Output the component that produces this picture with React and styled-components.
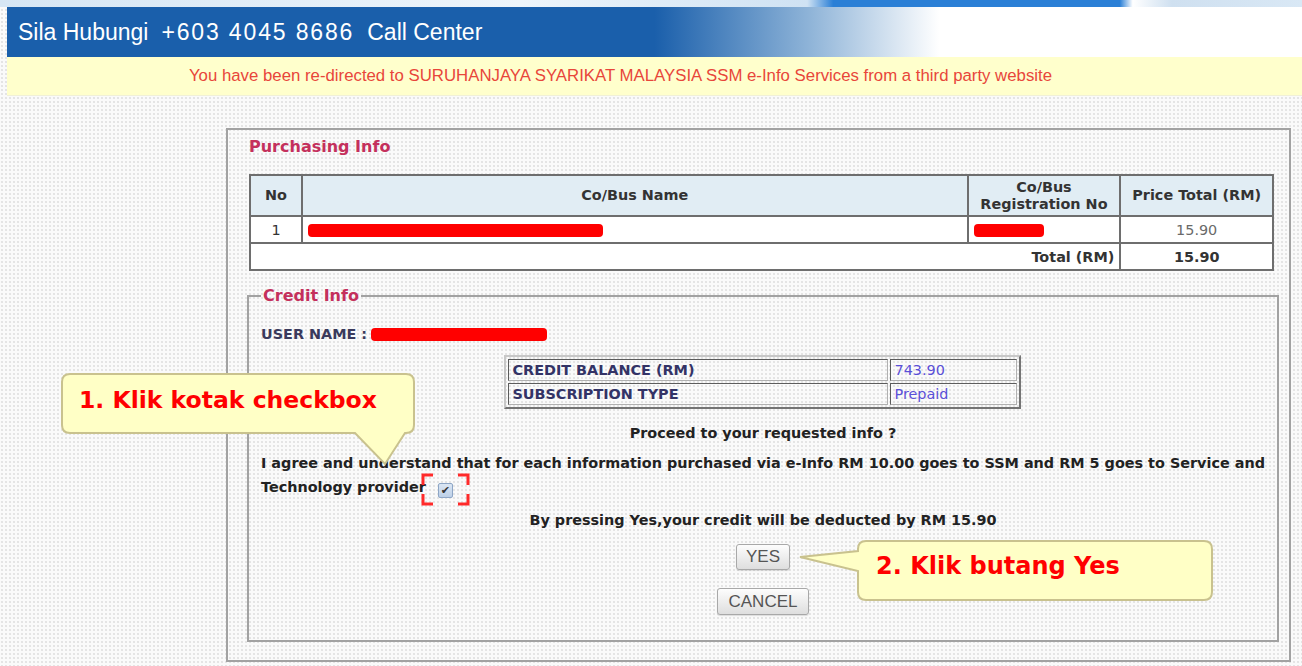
import styled, { createGlobalStyle } from "styled-components";

const GlobalStyle = createGlobalStyle`
  html, body {
    margin: 0;
    padding: 0;
  }
  body {
    background-color: #fafafa;
    background-image: radial-gradient(#e4e4e4 0.7px, transparent 1px);
    background-size: 4px 4px;
    font-family: "DejaVu Sans", Verdana, sans-serif;
  }
`;

const Page = styled.div`
  position: relative;
  width: 1302px;
  height: 666px;
  overflow: hidden;
`;

const TopStrip = styled.div`
  height: 7px;
  background: linear-gradient(
    90deg,
    #d6e6f4 0%,
    #eef5fb 40%,
    #cfe2f3 62%,
    #2a7fd6 64%,
    #2a7fd6 86%,
    #ffffff 87%,
    #cfe0f0 90%,
    #d9e8f5 100%
  );
`;

const Header = styled.div`
  margin-left: 7px;
  height: 50px;
  display: flex;
  align-items: center;
  gap: 13px;
  padding-left: 11px;
  background: linear-gradient(90deg, #1a5fab 0%, #1a5fab 50%, #8fb4d8 62%, #ffffff 72%, #ffffff 100%);
  color: #ffffff;
  font-family: "Liberation Sans", Arial, sans-serif;
  font-size: 23px;
  white-space: nowrap;
`;

const Phone = styled.span`
  letter-spacing: 1.85px;
`;

const Notice = styled.div`
  margin-left: 7px;
  height: 38px;
  display: flex;
  align-items: center;
  justify-content: center;
  padding-right: 68px;
  background: #ffffcc;
  border-bottom: 1px solid #f0f0d8;
  color: #e8463a;
  font-family: "Liberation Sans", Arial, sans-serif;
  font-size: 16.8px;
  white-space: nowrap;
`;

const Panel = styled.div`
  margin: 32px 11px 0 226px;
  border: 2px solid #a2a2a2;
  padding: 7px 15px 18px 21px;
`;

const SectionTitle = styled.div`
  color: #c4305c;
  font-weight: bold;
  font-size: 16px;
  line-height: 20px;
  margin-bottom: 17px;
`;

const OrderTable = styled.table`
  width: 1025px;
  border-collapse: collapse;
  border: 2px solid #6e6e6e;
  background: #ffffff;
  font-size: 14.4px;
  color: #333333;
`;

const HeadCell = styled.th`
  height: 39px;
  padding: 0 4px;
  background: #e1edf4;
  border: 2px solid #6e6e6e;
  font-weight: bold;
  line-height: 17px;
  text-align: center;
`;

const Cell = styled.td`
  height: 25px;
  padding: 0 5px;
  border: 2px solid #6e6e6e;
  line-height: 18px;
  text-align: ${({ $align }) => $align || "center"};
  font-weight: ${({ $bold }) => ($bold ? "bold" : "normal")};
  color: ${({ $muted }) => ($muted ? "#6a6a6a" : "#333333")};
`;

const Redacted = styled.span`
  display: inline-block;
  vertical-align: middle;
  width: ${({ $w }) => $w}px;
  height: 13px;
  background: #ff0000;
  border-radius: 4px;
`;

const CreditFieldset = styled.fieldset`
  margin: 16px -2px 0 -2px;
  border: 2px solid #a2a2a2;
  padding: 20px 12px 25px 12px;
`;

const Legend = styled.legend`
  padding: 0 2px;
  color: #c4305c;
  font-weight: bold;
  font-size: 16px;
  line-height: 18px;
`;

const UserRow = styled.div`
  display: flex;
  align-items: center;
  gap: 4px;
  color: #3a3a5c;
  font-weight: bold;
  font-size: 14.4px;
  line-height: 18px;
`;

const CreditTable = styled.table`
  margin: 12px auto 0;
  width: 517px;
  border: 2px outset #c8c8c8;
  border-spacing: 2px;
  font-size: 14.4px;
`;

const CreditLabel = styled.td`
  width: 372px;
  height: 20px;
  padding: 0 3px;
  border: 1px inset #b0b0b0;
  line-height: 18px;
  color: #333366;
  font-weight: bold;
`;

const CreditValue = styled.td`
  padding: 0 3px;
  border: 1px inset #b0b0b0;
  line-height: 18px;
  color: #5a50d8;
`;

const CenterLine = styled.div`
  text-align: center;
  font-weight: bold;
  font-size: 14.4px;
  line-height: 18px;
  color: #222222;
  margin-top: ${({ $top }) => $top}px;
`;

const Agreement = styled.div`
  margin-top: 9px;
  font-weight: bold;
  font-size: 14.4px;
  line-height: 24px;
  color: #222222;
  white-space: nowrap;
`;

const CheckWrap = styled.span`
  position: relative;
  display: inline-block;
  margin-left: 12px;
  vertical-align: -2px;
`;

const CheckBox = styled.span`
  display: block;
  width: 13px;
  height: 13px;
  border: 1px solid #8ea6c6;
  border-radius: 2px;
  background: linear-gradient(#dbe6f3, #bdd0e8);
  color: #333;
  font-size: 11px;
  line-height: 13px;
  text-align: center;
`;

const Brackets = styled.svg`
  position: absolute;
  left: -17px;
  top: -10px;
`;

const ButtonStack = styled.div`
  display: flex;
  flex-direction: column;
  align-items: center;
  margin-top: 15px;
  gap: 18px;
`;

const Button = styled.button`
  width: ${({ $w }) => $w}px;
  height: ${({ $h }) => $h}px;
  padding: 0;
  border: 1px solid #a8a8a8;
  border-radius: 3px;
  background: linear-gradient(#fdfdfd, #dedede);
  color: #555555;
  font-family: "Liberation Sans", Arial, sans-serif;
  font-size: 17px;
  box-shadow: 0 1px 1px rgba(0, 0, 0, 0.12);
`;

const Callout = styled.div`
  position: absolute;
  left: ${({ $x }) => $x}px;
  top: ${({ $y }) => $y}px;
`;

const CalloutText = styled.div`
  position: absolute;
  left: ${({ $x }) => $x}px;
  top: ${({ $y }) => $y}px;
  color: #ff0000;
  font-weight: bold;
  font-size: ${({ $size }) => $size}px;
  line-height: 28px;
  white-space: nowrap;
`;

function App() {
  return (
    <Page>
      <GlobalStyle />
      <TopStrip />
      <Header>
        <span>Sila Hubungi</span>
        <Phone>+603 4045 8686</Phone>
        <span>Call Center</span>
      </Header>
      <Notice>
        You have been re-directed to SURUHANJAYA SYARIKAT MALAYSIA SSM e-Info Services from a third party website
      </Notice>

      <Panel>
        <SectionTitle>Purchasing Info</SectionTitle>
        <OrderTable>
          <colgroup>
            <col style={{ width: 52 }} />
            <col style={{ width: 667 }} />
            <col style={{ width: 153 }} />
            <col style={{ width: 153 }} />
          </colgroup>
          <thead>
            <tr>
              <HeadCell>No</HeadCell>
              <HeadCell>Co/Bus Name</HeadCell>
              <HeadCell>
                Co/Bus
                <br />
                Registration No
              </HeadCell>
              <HeadCell>Price Total (RM)</HeadCell>
            </tr>
          </thead>
          <tbody>
            <tr>
              <Cell>1</Cell>
              <Cell $align="left">
                <Redacted $w={295} />
              </Cell>
              <Cell $align="left">
                <Redacted $w={70} />
              </Cell>
              <Cell $muted>15.90</Cell>
            </tr>
            <tr>
              <Cell colSpan={3} $align="right" $bold>
                Total (RM)
              </Cell>
              <Cell $bold>15.90</Cell>
            </tr>
          </tbody>
        </OrderTable>

        <CreditFieldset>
          <Legend>Credit Info</Legend>
          <UserRow>
            USER NAME : <Redacted $w={176} />
          </UserRow>

          <CreditTable>
            <tbody>
              <tr>
                <CreditLabel>CREDIT BALANCE (RM)</CreditLabel>
                <CreditValue>743.90</CreditValue>
              </tr>
              <tr>
                <CreditLabel>SUBSCRIPTION TYPE</CreditLabel>
                <CreditValue>Prepaid</CreditValue>
              </tr>
            </tbody>
          </CreditTable>

          <CenterLine $top={15}>Proceed to your requested info ?</CenterLine>

          <Agreement>
            I agree and understand that for each information purchased via e-Info RM 10.00 goes to SSM and RM 5 goes to Service and
            <br />
            Technology provider
            <CheckWrap>
              <CheckBox>✔</CheckBox>
              <Brackets width="49" height="33" viewBox="0 0 49 33">
                <g fill="none" stroke="#ff2a2a" strokeWidth="3">
                  <path d="M2,12 V2 H12" />
                  <path d="M37,2 H47 V12" />
                  <path d="M2,21 V31 H12" />
                  <path d="M37,31 H47 V21" />
                </g>
              </Brackets>
            </CheckWrap>
          </Agreement>

          <CenterLine $top={12}>By pressing Yes,your credit will be deducted by RM 15.90</CenterLine>

          <ButtonStack>
            <Button $w={54} $h={26}>YES</Button>
            <Button $w={92} $h={27}>CANCEL</Button>
          </ButtonStack>
        </CreditFieldset>
      </Panel>

      <Callout $x={60} $y={372}>
        <svg width="360" height="96" viewBox="0 0 360 96">
          <path
            d="M10,2 H346 Q354,2 354,10 V53 Q354,61 346,61 H345 L325,92 L295,61 H10 Q2,61 2,53 V10 Q2,2 10,2 Z"
            fill="#ffffc6"
            stroke="#c9c28e"
            strokeWidth="2"
          />
        </svg>
        <CalloutText $x={19} $y={14} $size={23.5}>1. Klik kotak checkbox</CalloutText>
      </Callout>

      <Callout $x={796} $y={539}>
        <svg width="420" height="64" viewBox="0 0 420 64">
          <path
            d="M70,2 H408 Q416,2 416,10 V53 Q416,61 408,61 H70 Q62,61 62,53 V32 L4,18 L62,12 V10 Q62,2 70,2 Z"
            fill="#ffffc6"
            stroke="#c9c28e"
            strokeWidth="2"
          />
        </svg>
        <CalloutText $x={80} $y={13} $size={24}>2. Klik butang Yes</CalloutText>
      </Callout>
    </Page>
  );
}

export default App;
